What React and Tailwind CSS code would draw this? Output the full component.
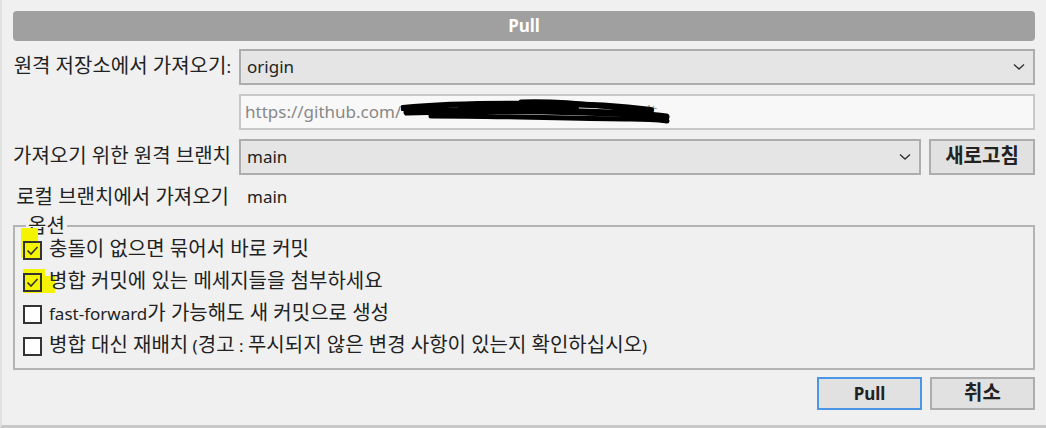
import React from "react";

const FONT = { fontFamily: '"Noto Sans", "Noto Sans CJK KR", sans-serif' };

function K({ children }) {
  const parts = String(children).split(/([\uAC00-\uD7A3](?:[\uAC00-\uD7A3 ]*[\uAC00-\uD7A3])?)/);
  return (
    <>
      {parts.map((p, i) =>
        i % 2 === 1 ? (
          <span key={i} className="text-[20px] leading-[20px]">{p}</span>
        ) : (
          <span key={i}>{p}</span>
        )
      )}
    </>
  );
}

function Chevron() {
  return (
    <svg width="12" height="8" viewBox="0 0 12 8" className="shrink-0">
      <polyline points="1,1.5 6,6 11,1.5" fill="none" stroke="#333" strokeWidth="1.4" />
    </svg>
  );
}

function Select({ value, className = "" }) {
  return (
    <div className={`h-[36px] flex items-center justify-between bg-[#e5e5e5] border-2 border-[#adadad] pl-[6px] pr-[8px] ${className}`}>
      <span>{value}</span>
      <Chevron />
    </div>
  );
}

function Check({ checked, label }) {
  return (
    <div className="flex items-center h-[32px] gap-[7px] whitespace-nowrap">
      <div className={`w-[19px] h-[19px] shrink-0 border-2 border-[#333] flex items-center justify-center ${checked ? "bg-[#f4f400]" : "bg-white"}`}>
        {checked && (
          <svg width="13" height="11" viewBox="0 0 13 11">
            <polyline points="1.5,5.5 5,9 11.5,2" fill="none" stroke="#333" strokeWidth="1.6" />
          </svg>
        )}
      </div>
      <span><K>{label}</K></span>
    </div>
  );
}

function Scribble() {
  return (
    <svg width="270" height="28" viewBox="0 0 270 28" className="absolute left-0 top-[-3px]">
      <path d="M2,10 C40,6 90,5 150,6 C190,6 220,8 250,12" stroke="#000" strokeWidth="6" fill="none" strokeLinecap="round" />
      <path d="M6,14 C60,12 120,12 180,14 C215,15 245,16 265,19" stroke="#000" strokeWidth="7" fill="none" strokeLinecap="round" />
      <path d="M30,18 C90,18 160,20 230,21 C248,21 258,22 266,23" stroke="#000" strokeWidth="5" fill="none" strokeLinecap="round" />
      <path d="M120,4 C150,3 175,5 200,8 C220,10 235,12 245,15" stroke="#000" strokeWidth="5" fill="none" strokeLinecap="round" />
      <path d="M60,9 C100,8 140,9 175,11" stroke="#000" strokeWidth="6" fill="none" strokeLinecap="round" />
    </svg>
  );
}

export default function App() {
  return (
    <div
      className="w-[1046px] h-[428px] bg-[#f0f0f0] border-l-2 border-b-[3px] border-l-[#e0e0e0] border-b-[#c8c8c8] text-[17px] text-[#222] pl-[11px] pr-[11px] pt-[11px] flex flex-col overflow-hidden"
      style={FONT}
    >
      <div className="h-[30px] rounded-[4px] bg-[#a0a0a0] text-white font-bold flex items-center justify-center">
        Pull
      </div>

      <div className="grid grid-cols-[226px_1fr] gap-y-[9px] mt-[8px] items-center">
        <div className="text-right pr-[8px] whitespace-nowrap"><K>원격 저장소에서 가져오기:</K></div>
        <Select value="origin" />

        <div />
        <div className="h-[36px] flex items-center bg-[#f8f8f8] border-2 border-[#c8c8c8] pl-[4px] text-[#888] whitespace-nowrap overflow-hidden">
          <span>https://github.com/</span>
          <span className="relative inline-block w-[268px] h-[22px]">
            <span className="absolute right-[12px] top-[-3px] text-[#999]">.git</span>
            <Scribble />
          </span>
        </div>

        <div className="text-right pr-[8px] whitespace-nowrap"><K>가져오기 위한 원격 브랜치</K></div>
        <div className="flex gap-[8px]">
          <Select value="main" className="flex-1" />
          <button className="w-[106px] h-[36px] bg-[#e1e1e1] border-2 border-[#adadad] font-bold"><K>새로고침</K></button>
        </div>

        <div className="text-right pr-[10px] whitespace-nowrap h-[26px] flex items-center justify-end"><K>로컬 브랜치에서 가져오기</K></div>
        <div className="pl-[8px] h-[26px] flex items-center">main</div>
      </div>

      <fieldset className="relative mt-[6px] border-2 border-[#b4b4b4] pl-[8px] pb-[8px] pt-0 h-[154px]">
        <legend className="ml-[3px] px-[2px] leading-[18px]"><K>옵션</K></legend>
        <div className="absolute left-[6px] top-[-8px] w-[17px] h-[30px] bg-[#f4f400]" />
        <div className="absolute left-[8px] top-[33px] w-[22px] h-[24px] bg-[#f4f400]" />
        <div className="absolute left-[20px] top-[40px] w-[20px] h-[17px] bg-[#f4f400]" />
        <div className="relative flex flex-col -mt-[2px]">
          <Check checked label="충돌이 없으면 묶어서 바로 커밋" />
          <Check checked label="병합 커밋에 있는 메세지들을 첨부하세요" />
          <Check label="fast-forward가 가능해도 새 커밋으로 생성" />
          <Check label="병합 대신 재배치 (경고 : 푸시되지 않은 변경 사항이 있는지 확인하십시오)" />
        </div>
      </fieldset>

      <div className="flex justify-end gap-[8px] mt-[7px]">
        <button className="w-[105px] h-[33px] bg-[#e1e1e1] border-2 border-[#4a97e6] font-bold">Pull</button>
        <button className="w-[105px] h-[33px] bg-[#e1e1e1] border-2 border-[#adadad] font-bold"><K>취소</K></button>
      </div>
    </div>
  );
}
